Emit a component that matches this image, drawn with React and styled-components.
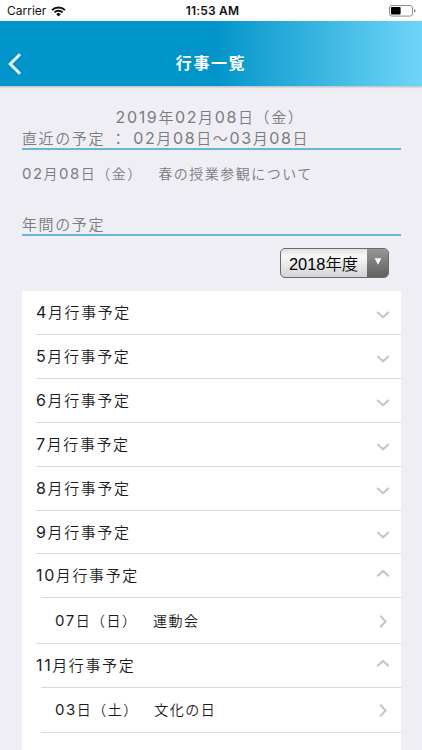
import React, { useState } from 'react'
import styled, { createGlobalStyle } from 'styled-components';


const meses = [
  { mes: '4月' },
  { mes: '5月' },
  { mes: '6月' },
  { mes: '7月' },
  { mes: '8月' },
  { mes: '9月' },
  { mes: '10月', eventos: [{ dia: '07日（日）', titulo: '運動会' }] },
  { mes: '11月', eventos: [{ dia: '03日（土）', titulo: '文化の日' }, { dia: '23日（金）', titulo: '勤労感謝の日' }] },
];

// los numeros van un poco mas grandes que el kanji
const Texto = ({ children }) => (
  <span>
    {children.split(/(\d+)/).map((t, i) => (i % 2 ? <Num key={i}>{t}</Num> : t))}
  </span>
);

const Chevron = ({ dir }) => (
  <Flecha $dir={dir} viewBox="0 0 14 8">
    <path d="M1.2 1.2 L7 6.6 L12.8 1.2" />
  </Flecha>
);

const App = () => {

  const [abiertos, setAbiertos] = useState(['10月', '11月']);

  const toggle = (mes) => {
    setAbiertos(abiertos.includes(mes) ? abiertos.filter((m) => m !== mes) : [...abiertos, mes]);
  };

  return (
    <Cont>
      <GlobalStyle />
      <StatusBar>
        <Carrier>
          Carrier
          <Wifi viewBox="0 0 15 11">
            <path d="M1 4.1 A9.2 9.2 0 0 1 14 4.1" />
            <path d="M3.4 6.4 A5.8 5.8 0 0 1 11.6 6.4" />
            <path className="dot" d="M5.2 8.2 A3.3 3.3 0 0 1 9.8 8.2 L7.5 10.6 Z" />
          </Wifi>
        </Carrier>
        <Hora>11:53 AM</Hora>
        <Bateria viewBox="0 0 27 12">
          <rect className="borde" x="0.5" y="0.5" width="23" height="10.6" rx="2.4" />
          <rect x="2" y="2" width="9.6" height="7.6" rx="0.8" />
          <path className="polo" d="M25 4 Q26.6 4.4 26.6 5.8 Q26.6 7.2 25 7.6 Z" />
        </Bateria>
      </StatusBar>

      <Header>
        <Volver viewBox="0 0 13 22">
          <path d="M12 1.2 L2.2 11 L12 20.8" />
        </Volver>
        <Title>行事一覧</Title>
      </Header>

      <Main>
        <Hoy><Texto>2019年02月08日（金）</Texto></Hoy>
        <Seccion><Texto>直近の予定 ： 02月08日〜03月08日</Texto></Seccion>
        <Proximo><Texto>02月08日（金）　春の授業参観について</Texto></Proximo>
        <Seccion>年間の予定</Seccion>

        <SelectRow>
          <Select>
            <Anio>2018年度</Anio>
            <SelectBtn>
              <svg width="8" height="7" viewBox="0 0 8 7"><path d="M0.6 0.3 H7.4 L4 6.7 Z" fill="#fff" /></svg>
            </SelectBtn>
          </Select>
        </SelectRow>

        <Lista>
          {meses.map(({ mes, eventos = [] }) => (
            <React.Fragment key={mes}>
              <Fila onClick={() => toggle(mes)}>
                <Texto>{mes + '行事予定'}</Texto>
                <Chevron dir={eventos.length && abiertos.includes(mes) ? 'up' : 'down'} />
              </Fila>
              {abiertos.includes(mes) && eventos.map((e) => (
                <Evento key={e.dia}>
                  <Texto>{e.dia + '　' + e.titulo}</Texto>
                  <Chevron dir="right" />
                </Evento>
              ))}
            </React.Fragment>
          ))}
        </Lista>
      </Main>
    </Cont>
  )
}

export default App

const GlobalStyle = createGlobalStyle`
body{
  margin:0;
  background-color:#efeef5;
  overflow:hidden;
}
`

const Cont = styled.div`
width:100%;
height:750px;
overflow:hidden;
display:flex;
flex-direction:column;
box-sizing:border-box;
background-color:#efeef5;
color:#7b7b80;
font-family:Inter, 'Noto Sans CJK JP', sans-serif;
font-weight:350;
text-spacing-trim:space-all;
`;

const Num = styled.span`
font-size:1.07em;
font-weight:400;
letter-spacing:0.1em;
line-height:1;
`;

const StatusBar = styled.div`
flex:none;
height:21px;
display:grid;
grid-template-columns:1fr auto 1fr;
align-items:center;
padding:0 6px 0 7px;
box-sizing:border-box;
background-color:white;
color:#111;
font-size:12px;
line-height:22px;
`;

const Carrier = styled.div`
display:flex;
align-items:center;
gap:5px;
font-weight:400;
`;

const Wifi = styled.svg`
width:15px;
height:11px;
fill:none;
stroke:#111;
stroke-width:2;
.dot{
  fill:#111;
  stroke:none;
}
`;

const Hora = styled.div`
padding-left:2px;
font-weight:600;
letter-spacing:0.2px;
`;

const Bateria = styled.svg`
width:27px;
height:12px;
justify-self:end;
fill:#000;
.borde{
  fill:none;
  stroke:#8d8d8d;
}
.polo{
  fill:#8d8d8d;
}
`;

const Header = styled.header`
flex:none;
height:65px;
display:grid;
grid-template-columns:40px 1fr 40px;
align-items:center;
padding-top:20px;
box-sizing:border-box;
color:white;
background-image:linear-gradient(90deg, #0094c8 50%, #6fd5f8 100%);
box-shadow:0 1px 2px rgba(0, 0, 0, 0.25);
`;

const Volver = styled.svg`
width:13px;
height:22px;
margin-left:8px;
fill:none;
stroke:white;
stroke-width:2.8;
`;

const Title = styled.h1`
margin:0;
padding-bottom:2px;
text-align:center;
font-size:16px;
font-weight:700;
letter-spacing:1.6px;
line-height:24px;
`;

const Main = styled.main`
display:flex;
flex-direction:column;
padding:21px 21px 0 22px;
`;

const Hoy = styled.div`
height:21px;
padding-right:3px;
line-height:21px;
text-align:center;
font-size:15px;
letter-spacing:1.6px;
`;

const Seccion = styled.h2`
margin:0;
height:22px;
line-height:22px;
box-sizing:border-box;
border-bottom:2px solid #66b7d3;
font-size:15px;
font-weight:350;
letter-spacing:1.6px;
white-space:pre;
`;

const Proximo = styled.div`
height:64px;
padding-top:14px;
box-sizing:border-box;
line-height:20px;
font-size:14px;
letter-spacing:1.5px;
white-space:pre;
`;

const SelectRow = styled.div`
display:flex;
justify-content:flex-end;
padding:12px 12px 13px 0;
`;

const Select = styled.div`
width:109px;
height:30px;
display:flex;
box-sizing:border-box;
border:1px solid #6a6a6a;
border-radius:5px;
overflow:hidden;
background-image:linear-gradient(#e0e0e2, #f8f8f9 25%, #d3d3d5);
`;

const Anio = styled.div`
flex:1;
padding-left:8px;
color:#000;
font-family:'Liberation Sans', 'Noto Sans CJK JP', sans-serif;
font-size:16.4px;
font-weight:350;
line-height:30px;
white-space:nowrap;
`;

const SelectBtn = styled.div`
width:21px;
display:flex;
justify-content:center;
padding-top:9px;
box-sizing:border-box;
background-image:linear-gradient(#969696, #606060);
`;

const Lista = styled.div`
display:flex;
flex-direction:column;
background-color:white;
color:#1c1c1e;
white-space:pre;
`;

const Fila = styled.div`
height:43.9px;
margin-left:14px;
padding:1px 11px 0 0;
display:flex;
justify-content:space-between;
align-items:center;
box-sizing:border-box;
border-top:1px solid #d9d9db;
font-size:15px;
line-height:20px;
letter-spacing:1.6px;
cursor:pointer;
&:first-child{
  height:43px;
  border-top:none;
}
`;

const Evento = styled(Fila)`
height:45.5px;
margin-left:19px;
padding:0 11px 0 14px;
font-size:14px;
letter-spacing:1.5px;
&:last-child{
  padding-top:3px;
}
`;

const giros = {
  up: 'translateY(-2.5px) rotate(180deg)',
  down: 'translateY(1.7px)',
  right: 'translateY(0.5px) rotate(-90deg)',
};

const Flecha = styled.svg`
width:14px;
height:8px;
margin-right:0.5px;
transform:${(p) => giros[p.$dir]};
fill:none;
stroke:#c5c5c9;
stroke-width:2;
`;
